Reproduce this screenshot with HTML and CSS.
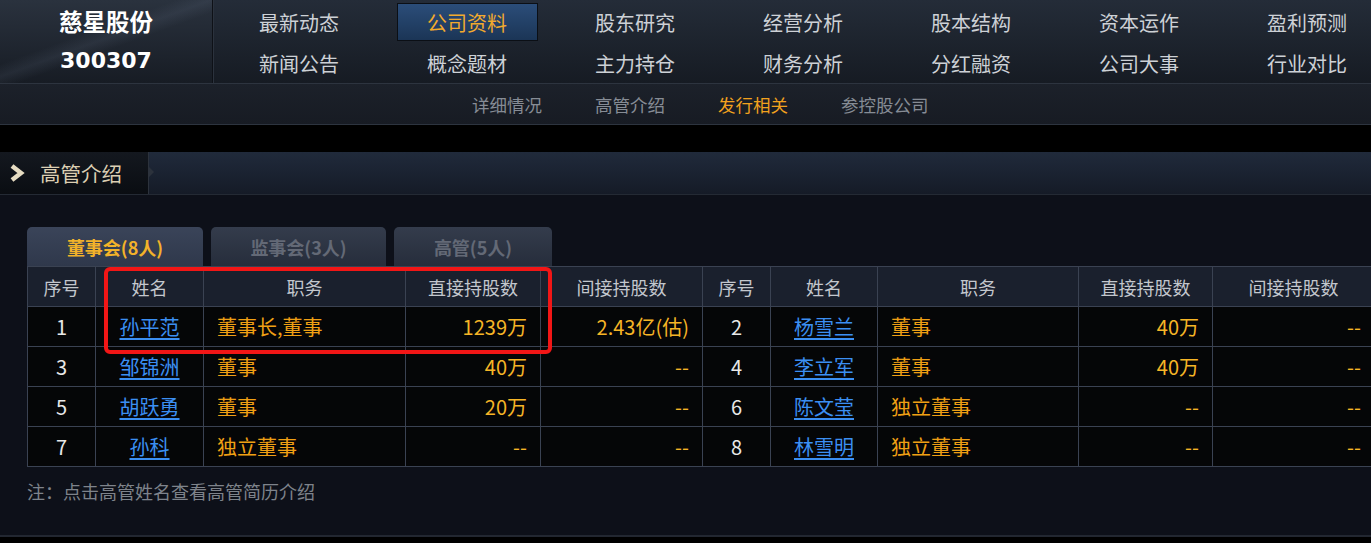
FILE: index.html
```html
<!DOCTYPE html>
<html lang="zh-CN">

<head>
  <meta charset="UTF-8">
  <meta name="viewport" content="width=device-width, initial-scale=1.0">
  <title>慈星股份 300307 高管介绍</title>
  <link rel="stylesheet" href="styles.css">
</head>

<body>
  <header class="top">
    <div class="brand">
      <div class="brand-name">慈星股份</div>
      <div class="brand-code">300307</div>
    </div>
    <nav class="main-nav">
      <a href="#">最新动态</a>
      <a href="#" class="active"><span>公司资料</span></a>
      <a href="#">股东研究</a>
      <a href="#">经营分析</a>
      <a href="#">股本结构</a>
      <a href="#">资本运作</a>
      <a href="#">盈利预测</a>
      <a href="#">新闻公告</a>
      <a href="#">概念题材</a>
      <a href="#">主力持仓</a>
      <a href="#">财务分析</a>
      <a href="#">分红融资</a>
      <a href="#">公司大事</a>
      <a href="#">行业对比</a>
    </nav>
  </header>

  <nav class="sub-nav">
    <a href="#">详细情况</a>
    <a href="#">高管介绍</a>
    <a href="#" class="current">发行相关</a>
    <a href="#">参控股公司</a>
  </nav>

  <div class="spacer"></div>

  <section class="panel">
    <div class="panel-head">
      <h2 class="panel-title">
        <svg class="chev" width="16" height="18" viewBox="0 0 16 18">
          <path d="M3 2 L12 9 L3 16" fill="none" stroke="#e6dcc2" stroke-width="4.5" stroke-linejoin="miter"/>
        </svg>
        高管介绍
      </h2>
    </div>

    <div class="panel-body">
      <div class="tabs">
        <button class="tab tab-on">董事会(8人)</button>
        <button class="tab tab-2">监事会(3人)</button>
        <button class="tab tab-3">高管(5人)</button>
      </div>

      <div class="table-wrap">
        <table class="mgr">
          <colgroup>
            <col style="width:68px"><col style="width:108px"><col style="width:202px"><col style="width:135px"><col style="width:162px">
            <col style="width:68px"><col style="width:107px"><col style="width:201px"><col style="width:134px"><col style="width:162px">
          </colgroup>
          <thead>
            <tr>
              <th>序号</th><th>姓名</th><th>职务</th><th>直接持股数</th><th>间接持股数</th>
              <th>序号</th><th>姓名</th><th>职务</th><th>直接持股数</th><th>间接持股数</th>
            </tr>
          </thead>
          <tbody>
            <tr>
              <td class="seq">1</td><td class="name"><a href="#">孙平范</a></td><td class="role">董事长,董事</td><td class="num">1239万</td><td class="num">2.43亿(估)</td>
              <td class="seq">2</td><td class="name"><a href="#">杨雪兰</a></td><td class="role">董事</td><td class="num">40万</td><td class="num">--</td>
            </tr>
            <tr>
              <td class="seq">3</td><td class="name"><a href="#">邹锦洲</a></td><td class="role">董事</td><td class="num">40万</td><td class="num">--</td>
              <td class="seq">4</td><td class="name"><a href="#">李立军</a></td><td class="role">董事</td><td class="num">40万</td><td class="num">--</td>
            </tr>
            <tr>
              <td class="seq">5</td><td class="name"><a href="#">胡跃勇</a></td><td class="role">董事</td><td class="num">20万</td><td class="num">--</td>
              <td class="seq">6</td><td class="name"><a href="#">陈文莹</a></td><td class="role">独立董事</td><td class="num">--</td><td class="num">--</td>
            </tr>
            <tr>
              <td class="seq">7</td><td class="name"><a href="#">孙科</a></td><td class="role">独立董事</td><td class="num">--</td><td class="num">--</td>
              <td class="seq">8</td><td class="name"><a href="#">林雪明</a></td><td class="role">独立董事</td><td class="num">--</td><td class="num">--</td>
            </tr>
          </tbody>
        </table>
        <!-- red marker drawn over the first record -->
        <div class="mark"></div>
      </div>

      <p class="note">注：点击高管姓名查看高管简历介绍</p>
    </div>
  </section>
</body>

</html>
```

FILE: styles.css
```css
html {
  overflow: hidden;
}

body {
  margin: 0;
  background-color: #000;
  font-family: 'Noto Sans CJK SC', 'Liberation Sans', sans-serif;
  color: #c8ccd2;
}

a {
  text-decoration: none;
}

/* top bar */
.top {
  display: flex;
  height: 83px;
  background: linear-gradient(#242c38, #161b23);
}

.brand {
  width: 212px;
  flex-shrink: 0;
  border-right: 1px solid #0e1117;
  box-shadow: 1px 0 0 #2b323d;
  background:
    linear-gradient(160deg, transparent 40%, rgba(120, 135, 160, 0.12) 48%, transparent 56%),
    linear-gradient(#2a323e, #171c24);
  text-align: center;
  font-weight: bold;
  color: #fff;
}

.brand-name {
  font-size: 23.5px;
  line-height: 24px;
  padding-top: 9px;
}

.brand-code {
  font-family: 'DejaVu Sans', sans-serif;
  font-size: 22px;
  line-height: 26px;
  padding-top: 15px;
}

.main-nav {
  display: grid;
  grid-template-columns: repeat(7, 168px);
  grid-auto-rows: 40px;
  row-gap: 1px;
  padding-top: 2px;
  margin-left: 2px;
  flex-shrink: 0;
}

.main-nav a {
  display: flex;
  align-items: center;
  justify-content: center;
  font-size: 20px;
  color: #cdd1d6;
}

.main-nav a.active span {
  display: flex;
  align-items: center;
  justify-content: center;
  width: 139px;
  height: 36px;
  border: 1px solid #0b0f15;
  background: linear-gradient(#2b4d79, #1b3556);
  color: #f2aa2e;
}

/* second level menu */
.sub-nav {
  display: flex;
  gap: 53px;
  height: 40px;
  align-items: center;
  padding-left: 472px;
  border-top: 1px solid #2d343f;
  border-bottom: 1px solid #2d343f;
  background: linear-gradient(#1c212a, #171b23);
}

.sub-nav a {
  font-size: 17.5px;
  color: #868c95;
}

.sub-nav a.current {
  color: #f2a21e;
}

.spacer {
  height: 27px;
  background-color: #000;
}

/* panel */
.panel {
  background-color: #0d1019;
  border-bottom: 2px solid #222731;
}

.panel-head {
  height: 42px;
  background: linear-gradient(#202a3b, #151b27);
  border-bottom: 1px solid #242a34;
}

.panel-title {
  position: relative;
  display: flex;
  align-items: center;
  gap: 15px;
  width: 139px;
  height: 42px;
  margin: 0;
  padding-left: 9px;
  background: linear-gradient(#14181f, #0a0d12);
  border-right: 1px solid #2c323c;
  font-size: 20.5px;
  font-weight: normal;
  color: #dccfb3;
}

.panel-title::after {
  content: '';
  position: absolute;
  right: -6px;
  top: 14px;
  border-top: 6px solid transparent;
  border-bottom: 6px solid transparent;
  border-left: 6px solid #2c323c;
}

.chev {
  flex-shrink: 0;
}

.panel-body {
  padding: 32px 0 31px 27px;
}

.tabs {
  display: flex;
  gap: 8px;
}

.tab {
  height: 39px;
  border: none;
  border-radius: 5px 5px 0 0;
  background: linear-gradient(#343c4c, #262d3b);
  font-family: inherit;
  font-size: 18px;
  font-weight: bold;
  color: #636976;
  padding: 0;
}

.tab-on {
  width: 176px;
  background: linear-gradient(#3a4459, #2f384b);
  color: #f2b22a;
}

.tab-2 {
  width: 175px;
}

.tab-3 {
  width: 158px;
}

/* table */
.table-wrap {
  position: relative;
}

.mgr {
  table-layout: fixed;
  width: 1347px;
  border-collapse: collapse;
}

.mgr th,
.mgr td {
  height: 39px;
  border: 1px solid #3a4252;
  padding: 0 13px;
  white-space: nowrap;
}

.mgr th {
  background-color: #1a202d;
  font-size: 18px;
  font-weight: normal;
  color: #c3c7cd;
  text-align: center;
}

.mgr td {
  background-color: #050607;
  font-size: 20px;
}

.seq {
  text-align: center;
  color: #e8e8e8;
}

.name {
  text-align: center;
}

.name a {
  color: #3b8ff2;
  text-decoration: underline;
  text-underline-offset: 3px;
}

.role {
  color: #f0a014;
}

.num {
  text-align: right;
  color: #f6b526;
}

.mark {
  position: absolute;
  left: 77px;
  top: 1px;
  width: 440px;
  height: 79px;
  border: 4px solid #f21616;
  border-radius: 6px;
}

.note {
  margin: 11px 0 0;
  font-size: 18px;
  color: #7e838b;
}
```
